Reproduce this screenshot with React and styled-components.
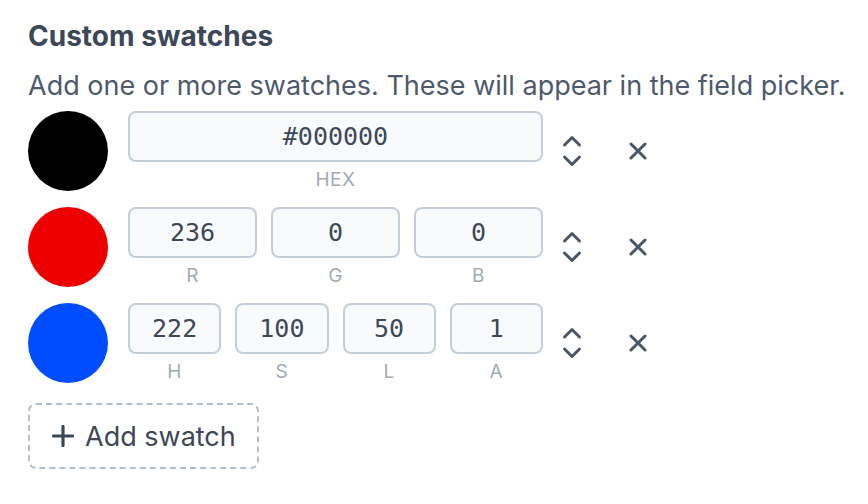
import styled, { createGlobalStyle } from "styled-components";

const GlobalStyle = createGlobalStyle`
  body {
    margin: 0;
    background: #ffffff;
    font-family: Inter, "Noto Sans", sans-serif;
  }
`;

const Panel = styled.section`
  padding: 19px 28px;
`;

const Title = styled.h2`
  margin: 0;
  font-size: 28px;
  line-height: 34px;
  font-weight: 700;
  color: #3c4858;
`;

const Description = styled.p`
  margin: 16px 0 0;
  font-size: 27px;
  line-height: 33px;
  color: #4e5a6b;
  white-space: nowrap;
`;

const SwatchList = styled.div`
  display: flex;
  flex-direction: column;
  gap: 16px;
  margin-top: 9px;
`;

const Row = styled.div`
  display: flex;
  align-items: center;
`;

const Swatch = styled.div`
  width: 80px;
  height: 80px;
  border-radius: 50%;
  flex: none;
  background: ${(p) => p.$color};
`;

const Fields = styled.div`
  display: grid;
  grid-template-columns: repeat(${(p) => p.$count}, 1fr);
  gap: 14px;
  width: 415px;
  margin-left: 20px;
  align-self: flex-start;
`;

const Field = styled.label`
  display: flex;
  flex-direction: column;
  align-items: center;
`;

const Input = styled.input`
  box-sizing: border-box;
  width: 100%;
  height: 51px;
  border: 2px solid #c4ceda;
  border-radius: 8px;
  background: #f8fafc;
  font-family: "DejaVu Sans Mono", "Liberation Mono", monospace;
  font-size: 25px;
  color: #3c4858;
  text-align: center;
  outline: none;
`;

const FieldLabel = styled.span`
  margin-top: 7px;
  font-size: 19px;
  line-height: 22px;
  color: #a0aab8;
  letter-spacing: 0.5px;
`;

const IconButton = styled.button`
  display: flex;
  align-items: center;
  justify-content: center;
  padding: 0;
  border: none;
  background: none;
  color: #4a5568;
  cursor: pointer;
  margin-left: ${(p) => p.$offset}px;
`;

const AddButton = styled.button`
  display: flex;
  align-items: center;
  gap: 11px;
  margin-top: 20px;
  height: 66px;
  padding: 0 21px 0 22px;
  border: 2px dashed #b3bfcf;
  border-radius: 8px;
  background: #fff;
  font-family: Inter, "Noto Sans", sans-serif;
  font-size: 27px;
  color: #3c4858;
  cursor: pointer;
`;

const swatches = [
  { color: "#000000", fields: [{ label: "HEX", value: "#000000" }] },
  {
    color: "rgb(236, 0, 0)",
    fields: [
      { label: "R", value: "236" },
      { label: "G", value: "0" },
      { label: "B", value: "0" },
    ],
  },
  {
    color: "hsl(222, 100%, 50%)",
    fields: [
      { label: "H", value: "222" },
      { label: "S", value: "100" },
      { label: "L", value: "50" },
      { label: "A", value: "1" },
    ],
  },
];

function Reorder() {
  return (
    <svg width="20" height="34" viewBox="0 0 20 34" fill="none" stroke="currentColor" strokeWidth="3" strokeLinecap="round" strokeLinejoin="round">
      <path d="M2.5 11 L10 3.5 L17.5 11" />
      <path d="M2.5 23 L10 30.5 L17.5 23" />
    </svg>
  );
}

function Cross() {
  return (
    <svg width="18" height="18" viewBox="0 0 18 18" fill="none" stroke="currentColor" strokeWidth="3" strokeLinecap="round">
      <path d="M2 2 L16 16 M16 2 L2 16" />
    </svg>
  );
}

function Plus() {
  return (
    <svg width="22" height="22" viewBox="0 0 22 22" fill="none" stroke="currentColor" strokeWidth="3.2" strokeLinecap="round">
      <path d="M11 1.5 V20.5 M1.5 11 H20.5" />
    </svg>
  );
}

export default function App() {
  return (
    <>
      <GlobalStyle />
      <Panel>
        <Title>Custom swatches</Title>
        <Description>Add one or more swatches. These will appear in the field picker.</Description>
        <SwatchList>
          {swatches.map((s, i) => (
            <Row key={i}>
              <Swatch $color={s.color} />
              <Fields $count={s.fields.length}>
                {s.fields.map((f) => (
                  <Field key={f.label}>
                    <Input defaultValue={f.value} />
                    <FieldLabel>{f.label}</FieldLabel>
                  </Field>
                ))}
              </Fields>
              <IconButton $offset={19}>
                <Reorder />
              </IconButton>
              <IconButton $offset={47}>
                <Cross />
              </IconButton>
            </Row>
          ))}
        </SwatchList>
        <AddButton>
          <Plus />
          Add swatch
        </AddButton>
      </Panel>
    </>
  );
}
